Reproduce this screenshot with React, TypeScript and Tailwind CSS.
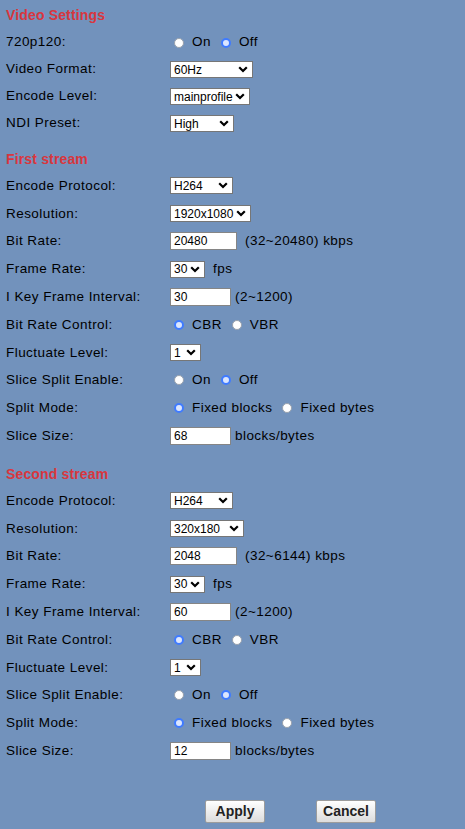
import React from 'react';

type Opt = { label: string; checked?: boolean; gap?: number };
type Ctl =
  | { kind: 'select'; value: string; w: number }
  | { kind: 'input'; value: string; w: number; suffix?: string; gap?: number }
  | { kind: 'radio'; options: Opt[] };

type Row = { label: string; ctl: Ctl };

const Chevron = () => (
  <svg width="10" height="7" viewBox="0 0 10 7" className="shrink-0">
    <path d="M1.2 1.2 L5 5 L8.8 1.2" fill="none" stroke="#000" strokeWidth="2.2" />
  </svg>
);

const Select = ({ value, w }: { value: string; w: number }) => (
  <div
    className="h-[17px] bg-white border border-[#767676] flex items-center justify-between pl-[3px] pr-[4px] text-[12px] text-black leading-none"
    style={{ width: w }}
  >
    <span>{value}</span>
    <Chevron />
  </div>
);

const Radio = ({ checked }: { checked?: boolean }) =>
  checked ? (
    <span className="w-[10px] h-[10px] rounded-full border-2 border-[#3f7bff] bg-[#dbe6ff] shrink-0" />
  ) : (
    <span className="w-[10px] h-[10px] rounded-full border border-[#9aa2ad] bg-white shrink-0" />
  );

// labels in the shot are slightly wider than plain 13px Arial
const txt = 'text-[13.5px] tracking-[0.45px] text-black';

const Control = ({ ctl }: { ctl: Ctl }) => {
  if (ctl.kind === 'select') return <Select value={ctl.value} w={ctl.w} />;
  if (ctl.kind === 'input')
    return (
      <div className="flex items-center">
        <div
          className="h-[18px] bg-white border border-[#858585] flex items-center pl-[3px] text-[12px] text-black leading-none"
          style={{ width: ctl.w }}
        >
          {ctl.value}
        </div>
        {ctl.suffix && (
          <span className={txt} style={{ marginLeft: ctl.gap ?? 5 }}>
            {ctl.suffix}
          </span>
        )}
      </div>
    );
  return (
    <div className="flex items-center pl-[4px]">
      {ctl.options.map((o, i) => (
        <div key={i} className="flex items-center" style={{ marginRight: o.gap ?? 0 }}>
          <Radio checked={o.checked} />
          <span className={`ml-[8px] ${txt}`}>{o.label}</span>
        </div>
      ))}
    </div>
  );
};

const onOff: Ctl = { kind: 'radio', options: [{ label: 'On', gap: 10 }, { label: 'Off', checked: true }] };
const cbr: Ctl = { kind: 'radio', options: [{ label: 'CBR', checked: true, gap: 10 }, { label: 'VBR' }] };
const split: Ctl = {
  kind: 'radio',
  options: [{ label: 'Fixed blocks', checked: true, gap: 10 }, { label: 'Fixed bytes' }],
};

const videoRows: Row[] = [
  { label: '720p120:', ctl: onOff },
  { label: 'Video Format:', ctl: { kind: 'select', value: '60Hz', w: 83 } },
  { label: 'Encode Level:', ctl: { kind: 'select', value: 'mainprofile', w: 80 } },
  { label: 'NDI Preset:', ctl: { kind: 'select', value: 'High', w: 64 } },
];

const streamRows = (
  res: string,
  resW: number,
  bitRate: string,
  range: string,
  interval: string,
  size: string
): Row[] => [
  { label: 'Encode Protocol:', ctl: { kind: 'select', value: 'H264', w: 63 } },
  { label: 'Resolution:', ctl: { kind: 'select', value: res, w: resW } },
  { label: 'Bit Rate:', ctl: { kind: 'input', value: bitRate, w: 67, suffix: range, gap: 8 } },
  { label: 'Frame Rate:', ctl: { kind: 'input', value: '', w: 0 } },
  { label: 'I Key Frame Interval:', ctl: { kind: 'input', value: interval, w: 61, suffix: '(2~1200)', gap: 4 } },
  { label: 'Bit Rate Control:', ctl: cbr },
  { label: 'Fluctuate Level:', ctl: { kind: 'select', value: '1', w: 31 } },
  { label: 'Slice Split Enable:', ctl: onOff },
  { label: 'Split Mode:', ctl: split },
  { label: 'Slice Size:', ctl: { kind: 'input', value: size, w: 61, suffix: 'blocks/bytes', gap: 4 } },
];

const FrameRate = () => (
  <div className="flex items-center">
    <Select value="30" w={35} />
    <span className={`ml-[8px] ${txt}`}>fps</span>
  </div>
);

const Rows = ({ rows, h }: { rows: Row[]; h: string }) => (
  <div>
    {rows.map((r) => (
      <div key={r.label} className={`flex items-center ${h}`}>
        <div className={`w-[164px] shrink-0 ${txt}`}>{r.label}</div>
        {r.label === 'Frame Rate:' ? <FrameRate /> : <Control ctl={r.ctl} />}
      </div>
    ))}
  </div>
);

const Heading = ({ children, className }: { children: React.ReactNode; className?: string }) => (
  <div className={`h-[22px] flex items-center text-[14px] tracking-[0.15px] font-bold text-[#d9363e] ${className ?? ''}`}>
    {children}
  </div>
);

const Button = ({ children }: { children: React.ReactNode }) => (
  <button className="w-[60px] h-[23px] rounded-[2px] border border-[#9c9c9c] bg-gradient-to-b from-white to-[#dcdcdc] text-[14px] font-bold text-[#222]">
    {children}
  </button>
);

export default function App() {
  return (
    <div
      className="min-h-screen w-full bg-[#7292bc] pl-[6px] pt-[4px] pb-[10px]"
      style={{ fontFamily: '"Liberation Sans", Arial, sans-serif' }}
    >
      <Heading>Video Settings</Heading>
      <div className="mt-[3px]">
        <Rows rows={videoRows} h="h-[27px]" />
      </div>

      <Heading className="mt-[11px]">First stream</Heading>
      <div className="mt-[2px]">
        <Rows rows={streamRows('1920x1080', 81, '20480', '(32~20480) kbps', '30', '68')} h="h-[27.8px]" />
      </div>

      <Heading className="mt-[14px]">Second stream</Heading>
      <div className="mt-px">
        <Rows rows={streamRows('320x180', 74, '2048', '(32~6144) kbps', '60', '12')} h="h-[27.8px]" />
      </div>

      <div className="mt-[35px] flex gap-[51px] pl-[199px]">
        <Button>Apply</Button>
        <Button>Cancel</Button>
      </div>
    </div>
  );
}
